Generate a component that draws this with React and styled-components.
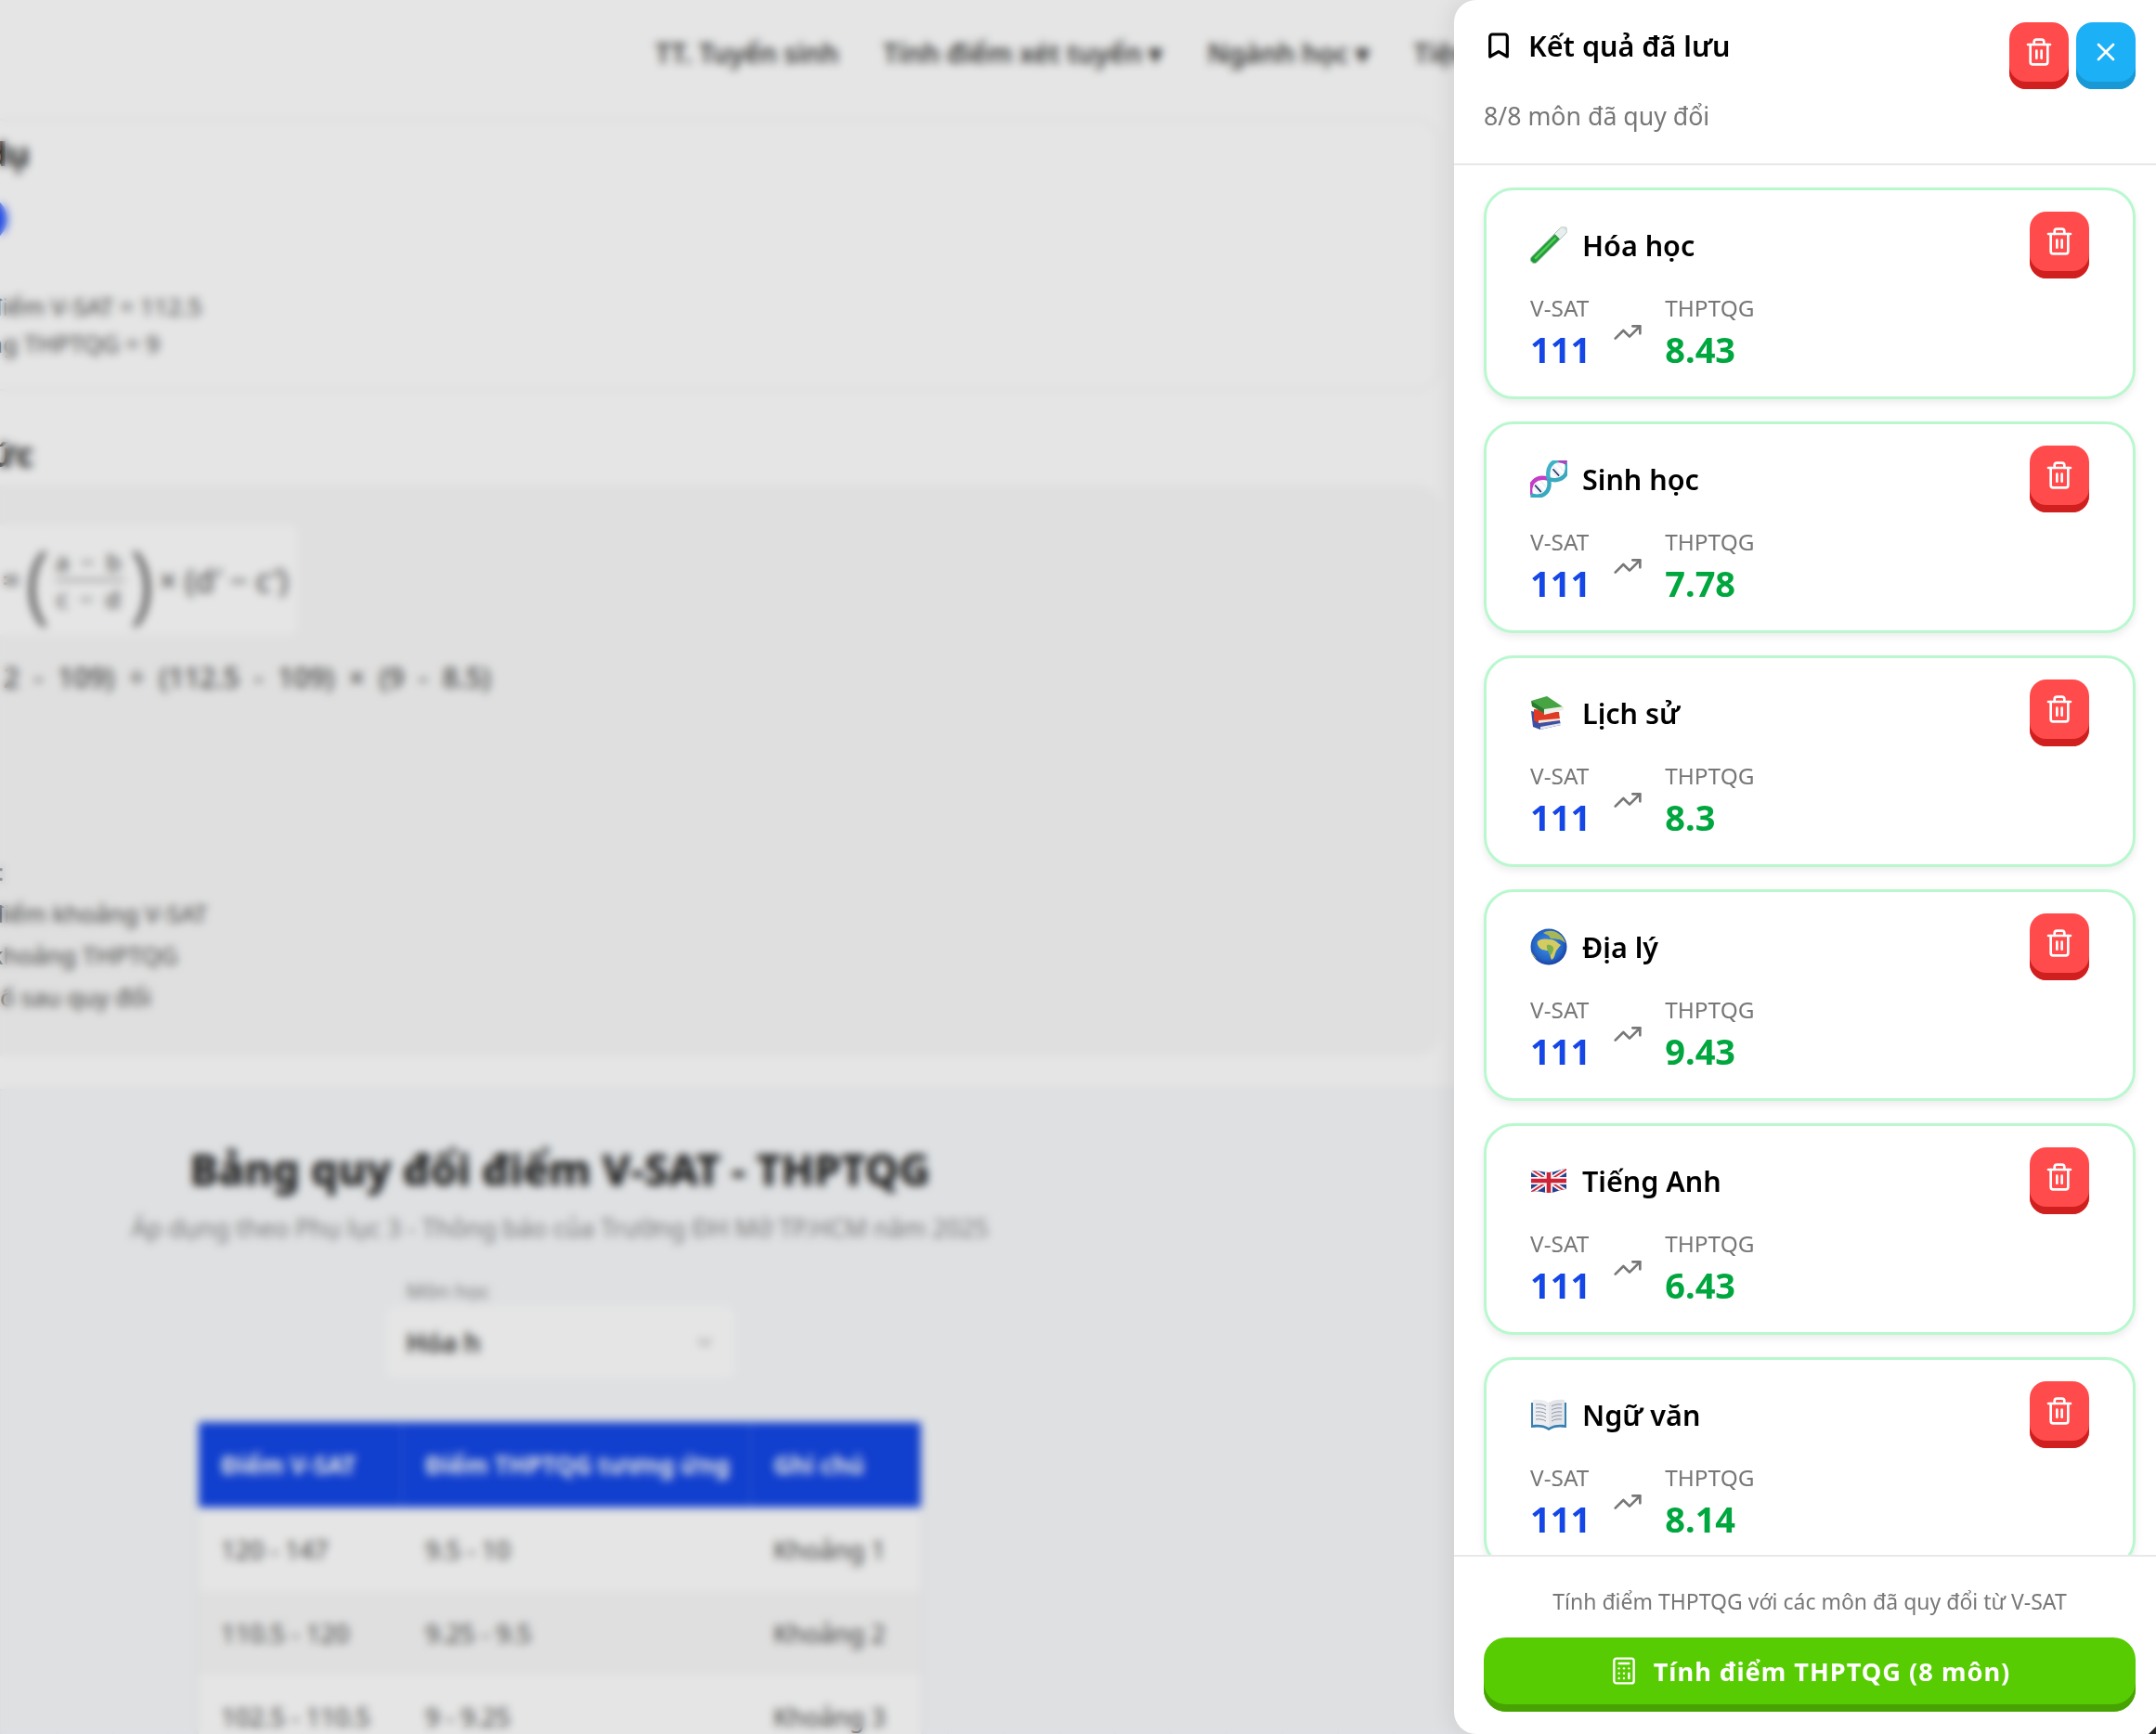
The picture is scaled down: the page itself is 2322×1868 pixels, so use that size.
import styled, { createGlobalStyle } from 'styled-components';
import { Bookmark, Calculator, Trash2, TrendingUp, X, ChevronDown } from 'lucide-react';

const GlobalStyle = createGlobalStyle`
  * { box-sizing: border-box; }
  html, body { margin: 0; padding: 0; height: 100%; overflow: hidden; }
  body { font-family: "Noto Sans", Roboto, sans-serif; background: #fff; color: #111; }
`;

const Page = styled.div`
  width: 100%;
  height: 1868px;
  overflow: hidden;
  background: #fff;
`;

const TopNav = styled.nav`
  height: 112px;
  display: flex;
  align-items: center;
  gap: 48px;
  padding-left: 706px;
  font-size: 28.7px;
  font-weight: 600;
  color: #3a3a3a;
  white-space: nowrap;
`;

const Upper = styled.div`
  margin-left: -130px;
  width: 1680px;
  height: 1061px;
  display: flex;
  flex-direction: column;
`;

const InfoCard = styled.section`
  height: 293px;
  margin-top: 16px;
  border: 2px solid #f3f3f3;
  border-radius: 24px;
  padding: 11px 0 0 70px;
  display: flex;
  flex-direction: column;
  align-items: flex-start;
`;

const SectionTitle = styled.h3`
  margin: 0;
  font-size: 36px;
  font-weight: 700;
  color: #222;
  white-space: nowrap;
`;

const BlueDot = styled.span`
  width: 48px;
  height: 48px;
  margin: 22px 0 0 18px;
  border-radius: 50%;
  background: #2b59ff;
  flex: none;
`;

const InfoLine = styled.p`
  margin: ${(p) => p.$top || 0}px 0 0;
  font-size: ${(p) => p.$size || 26}px;
  font-weight: ${(p) => p.$weight || 400};
  word-spacing: ${(p) => p.$spread || 0}px;
  line-height: ${(p) => p.$line || 40}px;
  color: #484848;
  white-space: nowrap;
`;

const FormulaTitle = styled(SectionTitle)`
  margin: 44px 0 0 -20px;
`;

const FormulaCard = styled.section`
  margin-top: 8px;
  height: 616px;
  background: #f9f9f9;
  border-radius: 24px;
  padding: 44px 0 0 90px;
  display: flex;
  flex-direction: column;
  align-items: flex-start;
`;

const FormulaBox = styled.div`
  height: 118px;
  width: 360px;
  background: #fff;
  border-radius: 8px;
  display: flex;
  align-items: center;
  justify-content: flex-end;
  gap: 6px;
  padding-right: 10px;
  font-size: 34px;
  color: #444;
  white-space: nowrap;
`;

const BigParen = styled.span`
  font-size: 92px;
  line-height: 100px;
  font-weight: 300;
`;

const Fraction = styled.span`
  display: flex;
  flex-direction: column;
  align-items: center;
  font-size: 26px;
  line-height: 38px;
  letter-spacing: 3px;
`;

const FractionTop = styled.span`
  border-bottom: 2px solid #777;
`;

const TableSection = styled.section`
  height: 695px;
  background: #f8fafc;
  background-image: repeating-linear-gradient(90deg, rgba(0, 0, 0, 0.012) 0 2px, transparent 2px 60px);
  border-top: 2px solid #f1f1f1;
`;

const TableColumn = styled.div`
  width: 1206px;
  padding-top: 54px;
  display: flex;
  flex-direction: column;
  align-items: center;
`;

const TableTitle = styled.h2`
  margin: 0;
  font-size: 46px;
  line-height: 60px;
  font-weight: 800;
  color: #1c1c1c;
  white-space: nowrap;
`;

const TableSub = styled.p`
  margin: 16px 0 0;
  font-size: 26.6px;
  color: #888;
  white-space: nowrap;
`;

const FilterLabel = styled.label`
  margin: 34px 0 0;
  width: 375px;
  padding-left: 22px;
  font-size: 22px;
  color: #888;
`;

const FilterSelect = styled.div`
  width: 375px;
  height: 78px;
  margin-top: 2px;
  background: #fff;
  border-radius: 10px;
  display: flex;
  align-items: center;
  justify-content: space-between;
  padding: 0 20px 0 22px;
  font-size: 28px;
  font-weight: 600;
  color: #333;
`;

const ScoreTable = styled.div`
  width: 778px;
  margin-top: 47px;
  display: grid;
  grid-template-columns: 220px 375px 183px;
  box-shadow: 0 2px 8px rgba(0, 0, 0, 0.06);
`;

const HeadCell = styled.div`
  height: 92px;
  background: #1447e6;
  color: #fff;
  font-size: 26px;
  font-weight: 700;
  display: flex;
  align-items: center;
  padding-left: 24px;
  white-space: nowrap;
  border-right: 2px solid #2f5de9;
`;

const BodyCell = styled.div`
  height: 90px;
  background: ${(p) => (p.$odd ? '#f9f9f9' : '#fff')};
  color: #444;
  font-size: 27px;
  display: flex;
  align-items: center;
  padding-left: 24px;
  white-space: nowrap;
`;

const Backdrop = styled.div`
  position: fixed;
  inset: 0;
  background: rgba(0, 0, 0, 0.1);
  backdrop-filter: blur(5px);
`;

const Drawer = styled.aside`
  position: fixed;
  top: 0;
  right: 0;
  bottom: 0;
  width: 756px;
  background: #fff;
  border-radius: 24px 0 0 24px;
  box-shadow: -4px 0 24px rgba(0, 0, 0, 0.08);
  display: flex;
  flex-direction: column;
`;

const CornerMark = styled.span`
  position: absolute;
  right: 0;
  bottom: 0;
  width: 8px;
  height: 8px;
  background: #222;
  clip-path: polygon(100% 0, 100% 100%, 0 100%);
`;

const DrawerHeader = styled.header`
  height: 178px;
  flex: none;
  border-bottom: 2px solid #e8e8e8;
  padding: 24px 22px 0 32px;
`;

const HeaderRow = styled.div`
  display: flex;
  justify-content: space-between;
  align-items: flex-start;
  height: 72px;
`;

const TitleRow = styled.div`
  display: flex;
  align-items: center;
  gap: 16px;
  height: 50px;
  font-size: 30.5px;
  line-height: 50px;
  font-weight: 600;
  color: #000;
`;

const HeaderActions = styled.div`
  display: flex;
  gap: 8px;
`;

const PressButton = styled.button`
  width: 64px;
  height: 72px;
  padding: 0 0 8px;
  border: 0;
  border-radius: 18px;
  color: #fff;
  background: ${(p) => p.$bg};
  box-shadow: inset 0 -8px 0 ${(p) => p.$edge};
  display: flex;
  align-items: center;
  justify-content: center;
  cursor: pointer;
`;

const Subtitle = styled.p`
  margin: 8px 0 0;
  font-size: 26.7px;
  line-height: 42px;
  color: #777;
`;

const CardList = styled.div`
  flex: 1;
  min-height: 0;
  overflow: hidden;
  padding: 24px 22px 0 32px;
  display: flex;
  flex-direction: column;
  gap: 24px;
`;

const SubjectCard = styled.article`
  flex: none;
  height: 228px;
  border: 3px solid #b9f8cf;
  border-radius: 32px;
  background: #fff;
  box-shadow: 0 4px 8px rgba(0, 0, 0, 0.08);
  padding: 23px 47px 0 47px;
  display: flex;
  justify-content: space-between;
  align-items: flex-start;
`;

const CardBody = styled.div`
  display: flex;
  flex-direction: column;
`;

const SubjectName = styled.div`
  display: flex;
  align-items: center;
  gap: 16px;
  height: 56px;
  margin-top: 8px;
  font-size: 30.5px;
  font-weight: 600;
  color: #000;
`;

const EmojiIcon = styled.svg`
  width: 40px;
  height: 40px;
  flex: none;
`;

const Scores = styled.div`
  display: flex;
  align-items: center;
  gap: 24px;
  margin-top: 24px;
`;

const ScoreCol = styled.div`
  display: flex;
  flex-direction: column;
`;

const ScoreLabel = styled.span`
  font-size: 24.4px;
  line-height: 32px;
  color: #777;
`;

const ScoreValue = styled.span`
  font-size: 38px;
  line-height: 48px;
  margin-top: 4px;
  font-weight: 700;
  color: ${(p) => p.$color};
`;

const DrawerFooter = styled.footer`
  flex: none;
  height: 193px;
  border-top: 2px solid #e8e8e8;
  padding: 0 22px 0 32px;
  display: flex;
  flex-direction: column;
`;

const FooterNote = styled.p`
  margin: 32px 0 0;
  font-size: 23px;
  line-height: 32px;
  color: #777;
  text-align: center;
`;

const SubmitButton = styled.button`
  height: 80px;
  margin-top: 23px;
  padding: 0 0 8px;
  border: 0;
  border-radius: 24px;
  background: #58cc02;
  box-shadow: inset 0 -8px 0 #46a302;
  color: #fff;
  display: flex;
  align-items: center;
  justify-content: center;
  gap: 16px;
  font-family: inherit;
  font-size: 27.2px;
  font-weight: 700;
  letter-spacing: 1px;
  cursor: pointer;
`;

function TestTube() {
  return (
    <EmojiIcon viewBox="0 0 40 40">
      <g transform="rotate(45 20 20)">
        <rect x="15.8" y="-6" width="8.4" height="52" rx="4.2" fill="#e6efec" stroke="#9fb8ae" strokeWidth="0.8" />
        <path d="M16.3 7h7.4v34.8a3.7 3.7 0 0 1-7.4 0z" fill="#1f9a36" />
        <path d="M18.6 9h2.6v32h-2.6z" fill="#53cc5c" />
        <rect x="14.8" y="-7" width="10.4" height="3" rx="1.4" fill="#cfdcd8" />
      </g>
    </EmojiIcon>
  );
}

function Dna() {
  return (
    <EmojiIcon viewBox="0 0 40 40">
      <g transform="rotate(-42 20 20)">
        <path d="M2 13v14M7 12v16M12 13v14M28 13v14M33 12v16M38 13v14" stroke="#f2f3f8" strokeWidth="2.4" />
        <path d="M4.5 15v10M30.5 15v10" stroke="#2c3f72" strokeWidth="1.8" />
        <path d="M-6 20C1 8 13 8 20 20" fill="none" stroke="#c43dc6" strokeWidth="4.4" />
        <path d="M-6 20C1 32 13 32 20 20" fill="none" stroke="#38a9bf" strokeWidth="4.4" />
        <path d="M20 20C27 32 39 32 46 20" fill="none" stroke="#38a9bf" strokeWidth="4.4" />
        <path d="M20 20C26 9 35 8 41 12" fill="none" stroke="#3fb2c8" strokeWidth="4.4" />
        <path d="M41 12c2 2 4 5 5 8" fill="none" stroke="#a347c0" strokeWidth="4.4" />
      </g>
    </EmojiIcon>
  );
}

function Books() {
  return (
    <EmojiIcon viewBox="0 0 40 40">
      <path d="M1 18l30 6 2 9-22 5-8-3z" fill="#3c50a4" />
      <path d="M11 35l22-4v2l-22 5z" fill="#e6e6ee" />
      <path d="M4 16l27 3 1 9-23 3-5-3z" fill="#e03a25" />
      <path d="M9 28l23-2v2l-23 3z" fill="#f2e9dc" />
      <path d="M1 7l17-5 18 12-21 7z" fill="#46a443" />
      <path d="M1 7l14 9 1 5L2 13z" fill="#2b7a30" />
      <path d="M15 16l21-3v4l-21 5z" fill="#efefe9" />
    </EmojiIcon>
  );
}

function Globe() {
  return (
    <EmojiIcon viewBox="0 0 40 40">
      <defs>
        <radialGradient id="globeSea" cx="48%" cy="45%" r="58%">
          <stop offset="0%" stopColor="#3f96e8" />
          <stop offset="70%" stopColor="#2464c6" />
          <stop offset="100%" stopColor="#173a96" />
        </radialGradient>
      </defs>
      <circle cx="20" cy="20" r="19.5" fill="url(#globeSea)" />
      <path d="M8 14c3-3 9-3 13-2 4 0 7 2 9 4l3 2c-2 3-5 5-6 9-1 4-2 6-4 7-2-3-1-7-3-10-3 0-7 0-10-3-2-2-3-5-2-7z" fill="#d4cb62" />
      <path d="M14 5c5-3 12-3 17 1 3 2 6 6 7 10-3-2-5-4-8-4-3-1-6-1-8-1l-2-3-6-3z" fill="#a8b65a" />
      <path d="M18 18c3-1 7 1 7 4s-2 6-3 7-5-8-4-11z" fill="#7dae50" />
      <path d="M2 26c1 2 3 5 5 7-3-1-5-4-5-7z" fill="#c9c45c" />
    </EmojiIcon>
  );
}

function Flag() {
  return (
    <EmojiIcon viewBox="0 0 40 40">
      <defs>
        <clipPath id="flagClip">
          <path d="M1 10c6-2 12 1 19 1s13-4 19-4v22c-6 0-12 4-19 4S7 30 1 32z" />
        </clipPath>
      </defs>
      <g clipPath="url(#flagClip)">
        <rect width="40" height="40" fill="#26408f" />
        <path d="M0 7l40 26M40 7L0 33" stroke="#f4f4f4" strokeWidth="5.5" />
        <path d="M0 7l40 26M40 7L0 33" stroke="#cf2438" strokeWidth="1.8" />
        <path d="M20 0v40M0 20h40" stroke="#f4f4f4" strokeWidth="8" />
        <path d="M20 0v40M0 20h40" stroke="#cf2438" strokeWidth="4.5" />
      </g>
    </EmojiIcon>
  );
}

function OpenBook() {
  return (
    <EmojiIcon viewBox="0 0 40 40">
      <path d="M1 7v27c7-1 14-1 19 3 5-4 12-4 19-3V7z" fill="#3780b2" />
      <path d="M3 4c6-1 13 0 17 3v27C16 31 9 30 3 31z" fill="#eceef2" />
      <path d="M37 4c-6-1-13 0-17 3v27c4-3 11-4 17-3z" fill="#e3e5ea" />
      <path d="M6 9c4-.5 8 0 11 2M6 13c4-.5 8 0 11 2M6 17c4-.5 8 0 11 2M6 21c4-.5 8 0 11 2M6 25c4-.5 8 0 11 2M34 9c-4-.5-8 0-11 2M34 13c-4-.5-8 0-11 2M34 17c-4-.5-8 0-11 2M34 21c-4-.5-8 0-11 2M34 25c-4-.5-8 0-11 2" stroke="#8f98a6" strokeWidth="1" fill="none" />
    </EmojiIcon>
  );
}

const subjects = [
  { name: 'Hóa học', thptqg: '8.43', Icon: TestTube },
  { name: 'Sinh học', thptqg: '7.78', Icon: Dna },
  { name: 'Lịch sử', thptqg: '8.3', Icon: Books },
  { name: 'Địa lý', thptqg: '9.43', Icon: Globe },
  { name: 'Tiếng Anh', thptqg: '6.43', Icon: Flag },
  { name: 'Ngữ văn', thptqg: '8.14', Icon: OpenBook },
];

const rows = [
  ['120 - 147', '9.5 - 10', 'Khoảng 1'],
  ['110.5 - 120', '9.25 - 9.5', 'Khoảng 2'],
  ['102.5 - 110.5', '9 - 9.25', 'Khoảng 3'],
];

function BackgroundPage() {
  return (
    <Page>
      <TopNav>
        <span>TT. Tuyển sinh</span>
        <span>Tính điểm xét tuyển ▾</span>
        <span>Ngành học ▾</span>
        <span>Tiện ích</span>
      </TopNav>
      <Upper>
        <InfoCard>
          <SectionTitle>Ví dụ</SectionTitle>
          <BlueDot />
          <InfoLine $top={50}>Với điểm V-SAT = 112.5</InfoLine>
          <InfoLine>Thang THPTQG = 9</InfoLine>
        </InfoCard>
        <FormulaTitle>Công thức</FormulaTitle>
        <FormulaCard>
          <FormulaBox>
            <span>=</span>
            <BigParen>(</BigParen>
            <Fraction>
              <FractionTop>a − b</FractionTop>
              <span>c − d</span>
            </Fraction>
            <BigParen>)</BigParen>
            <span>× (d′ − c′)</span>
          </FormulaBox>
          <InfoLine $top={26} $size={30} $weight={500} $spread={8}>
            (112 - 109) ÷ (112.5 - 109) × (9 - 8.5)
          </InfoLine>
          <InfoLine $top={167} $line={45}>Với:</InfoLine>
          <InfoLine $line={45}>a: điểm khoảng V-SAT</InfoLine>
          <InfoLine $line={45}>b: khoảng THPTQG</InfoLine>
          <InfoLine $line={45}>x: số sau quy đổi</InfoLine>
        </FormulaCard>
      </Upper>
      <TableSection>
        <TableColumn>
          <TableTitle>Bảng quy đổi điểm V-SAT - THPTQG</TableTitle>
          <TableSub>Áp dụng theo Phụ lục 3 - Thông báo của Trường ĐH Mở TP.HCM năm 2025</TableSub>
          <FilterLabel>Môn học</FilterLabel>
          <FilterSelect>
            Hóa h
            <ChevronDown size={24} color="#999" />
          </FilterSelect>
          <ScoreTable>
            <HeadCell>Điểm V-SAT</HeadCell>
            <HeadCell>Điểm THPTQG tương ứng</HeadCell>
            <HeadCell>Ghi chú</HeadCell>
            {rows.map((row, i) =>
              row.map((cell) => (
                <BodyCell key={cell} $odd={i % 2 === 1}>{cell}</BodyCell>
              ))
            )}
          </ScoreTable>
        </TableColumn>
      </TableSection>
    </Page>
  );
}

function App() {
  return (
    <>
      <GlobalStyle />
      <BackgroundPage />
      <Backdrop />
      <Drawer>
        <DrawerHeader>
          <HeaderRow>
            <TitleRow>
              <Bookmark size={32} strokeWidth={2.4} />
              Kết quả đã lưu
            </TitleRow>
            <HeaderActions>
              <PressButton $bg="#ff4b4b" $edge="#d01f1f"><Trash2 size={32} /></PressButton>
              <PressButton $bg="#1cb0f6" $edge="#1899d6"><X size={32} /></PressButton>
            </HeaderActions>
          </HeaderRow>
          <Subtitle>8/8 môn đã quy đổi</Subtitle>
        </DrawerHeader>
        <CardList>
          {subjects.map(({ name, thptqg, Icon }) => (
            <SubjectCard key={name}>
              <CardBody>
                <SubjectName><Icon />{name}</SubjectName>
                <Scores>
                  <ScoreCol>
                    <ScoreLabel>V-SAT</ScoreLabel>
                    <ScoreValue $color="#1447e6">111</ScoreValue>
                  </ScoreCol>
                  <TrendingUp size={32} color="#777" strokeWidth={2} />
                  <ScoreCol>
                    <ScoreLabel>THPTQG</ScoreLabel>
                    <ScoreValue $color="#00a63e">{thptqg}</ScoreValue>
                  </ScoreCol>
                </Scores>
              </CardBody>
              <PressButton $bg="#ff4b4b" $edge="#d01f1f"><Trash2 size={32} /></PressButton>
            </SubjectCard>
          ))}
        </CardList>
        <DrawerFooter>
          <FooterNote>Tính điểm THPTQG với các môn đã quy đổi từ V-SAT</FooterNote>
          <SubmitButton>
            <Calculator size={32} strokeWidth={1.8} />
            Tính điểm THPTQG (8 môn)
          </SubmitButton>
        </DrawerFooter>
        <CornerMark />
      </Drawer>
    </>
  );
}

export default App;
